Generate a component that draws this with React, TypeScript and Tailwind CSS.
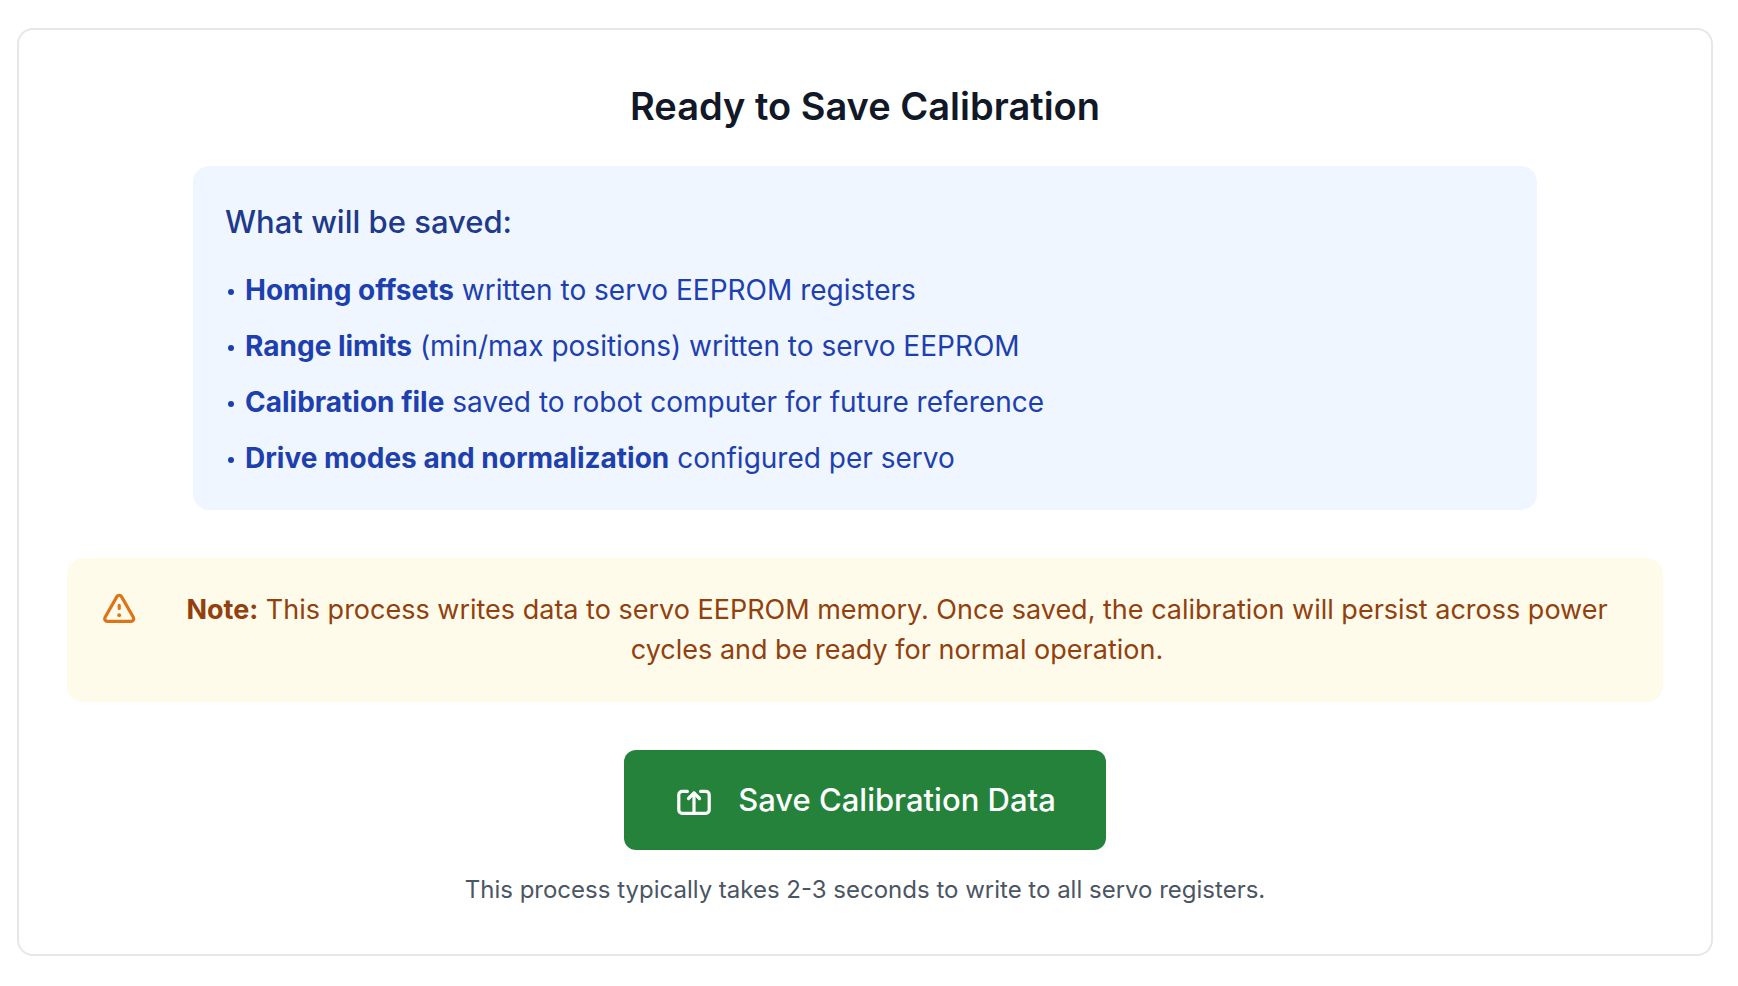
const savedItems = [
  { label: 'Homing offsets', detail: 'written to servo EEPROM registers' },
  { label: 'Range limits', detail: '(min/max positions) written to servo EEPROM' },
  { label: 'Calibration file', detail: 'saved to robot computer for future reference' },
  { label: 'Drive modes and normalization', detail: 'configured per servo' },
];

function WarningIcon() {
  return (
    <svg className="size-10 shrink-0 text-[#dd7418]" viewBox="0 0 40 40" fill="none" stroke="currentColor" strokeWidth="3.2" strokeLinecap="round" strokeLinejoin="round" aria-hidden="true">
      <path d="M17.9 6.6 6.1 27.2c-1 1.9.1 4.1 2.2 4.1h23.8c2.1 0 3.2-2.2 2.2-4.1L22.5 6.6c-1-1.8-3.6-1.8-4.6 0Z" />
      <path d="M20.2 15.4v3" />
      <path d="M20.2 25.2h.01" strokeWidth="3.8" />
    </svg>
  );
}

function UploadIcon() {
  return (
    <svg className="size-10 shrink-0" viewBox="0 0 40 40" fill="none" stroke="currentColor" strokeWidth="3.2" strokeLinecap="round" strokeLinejoin="round" aria-hidden="true">
      <path d="M13.4 11.4H8.200a3.400 3.400 0 0 0-3.400 3.400v15.200a3.400 3.400 0 0 0 3.400 3.400h23.600a3.400 3.400 0 0 0 3.400-3.400V14.800a3.400 3.400 0 0 0-3.400-3.400H26.600" />
      <path d="M20 33V13" />
      <path d="m14.500 18.500 5.500-5.500 5.500 5.500" />
    </svg>
  );
}

export default function App() {
  return (
    <main className="min-h-screen bg-white pt-7 pr-[25px] pb-7 pl-[17px] font-[Inter,sans-serif]">
      <section className="flex flex-col items-center rounded-2xl border-2 border-[#e5e7eb] p-12">
        <h1 className="mb-8 text-center text-[38px] leading-[56px] font-semibold text-[#111827]">
          Ready to Save Calibration
        </h1>

        <div className="mb-12 w-full max-w-[1344px] rounded-2xl bg-[#eff6ff] p-8">
          <h2 className="mb-6 text-[31px] leading-[48px] font-medium text-[#1e3a8a]">What will be saved:</h2>
          <ul className="flex flex-col gap-4 text-[28px] leading-[40px] text-[#1e40af]">
            {savedItems.map((item) => (
              <li key={item.label} className="flex gap-2">
                <span className="flex w-3 shrink-0 items-center justify-center pt-1" aria-hidden="true">
                  <span className="size-1.5 rounded-full bg-[#1e40af]" />
                </span>
                <span>
                  <strong className="font-bold">{item.label}</strong> {item.detail}
                </span>
              </li>
            ))}
          </ul>
        </div>

        <div className="mb-12 flex w-full items-start gap-6 rounded-2xl bg-[#fffbeb] p-8">
          <WarningIcon />
          <p className="flex-1 text-center text-[27px] leading-[40px] text-[#92400e]">
            <strong className="font-bold">Note:</strong> This process writes data to servo EEPROM memory. Once saved, the
            calibration will persist across power cycles and be ready for normal operation.
          </p>
        </div>

        <button type="button" className="flex items-center gap-6 rounded-xl bg-[#25823b] px-[50px] py-[26px] text-[31px] leading-[48px] font-medium text-white">
          <UploadIcon />
          Save Calibration Data
        </button>
        <p className="mt-6 text-center text-[24px] leading-[32px] text-[#4b5563]">
          This process typically takes 2-3 seconds to write to all servo registers.
        </p>
      </section>
    </main>
  );
}
